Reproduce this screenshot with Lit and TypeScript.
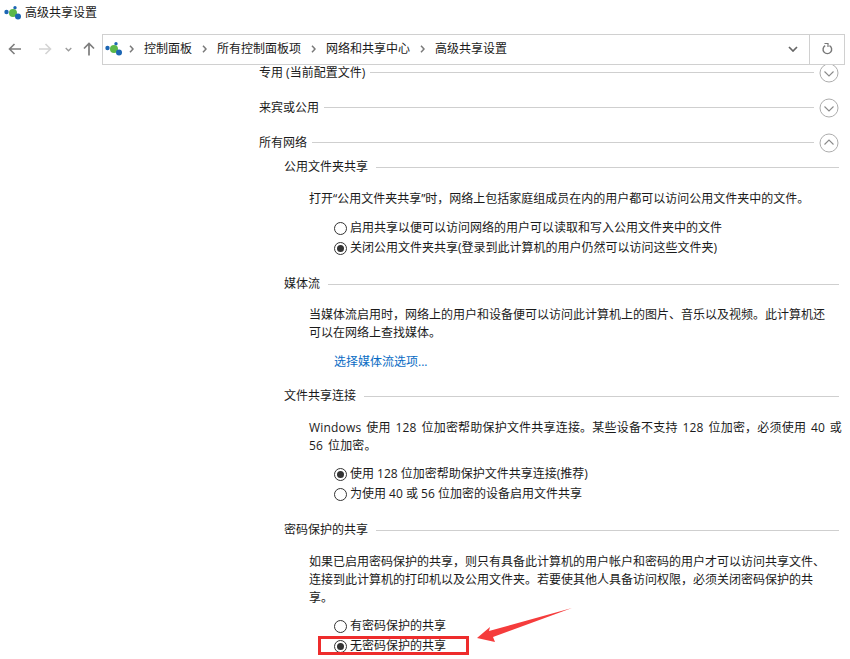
import { LitElement, html, css, svg } from "lit";
import { customElement } from "lit/decorators.js";

const netIcon = svg`<svg class="net" width="17" height="15" viewBox="0 0 17 15"><circle cx="2.500" cy="6" r="2.200" fill="#1c66b4"/><circle cx="11" cy="1.800" r="1.700" fill="#1c66b4"/><circle cx="9" cy="7" r="4" fill="#5cb84a"/><circle cx="14" cy="10.500" r="3" fill="#1c66b4"/></svg>`;

const sep = html`<svg class="sep" width="5" height="8" viewBox="0 0 5 8"><path d="M1 0.800 4 4 1 7.200" fill="none" stroke="#7a7a7a" stroke-width="1.500"/></svg>`;

const circle = (up: boolean) => html`<svg class="toggle" width="20" height="20" viewBox="0 0 20 20"><circle cx="10" cy="10" r="9" fill="#fff" stroke="#adadad"/><path d="${up ? "M5.500 11.500 10 7l4.500 4.500" : "M5.500 8.500 10 13l4.500-4.500"}" fill="none" stroke="#8a8a8a" stroke-width="1.100"/></svg>`;

const radio = (label: string, on: boolean) => html`<div class="radio"><svg width="13" height="13" viewBox="0 0 13 13"><circle cx="6.500" cy="6.500" r="6" fill="#fff" stroke="#333"/>${on ? svg`<circle cx="6.500" cy="6.500" r="3.500" fill="#333"/>` : ""}</svg><span>${label}</span></div>`;

@customElement("app-root")
export class AppRoot extends LitElement {
  static styles = css`
    :host { display: block; width: 850px; height: 659px; position: relative; overflow: hidden; background: #fff; color: #1a1a1a;
      font: 12px/20px "Open Sans", "Noto Sans CJK SC", sans-serif; }
    .title { display: flex; align-items: center; gap: 4px; height: 26px; padding-left: 4px; }
    .toolbar { display: flex; align-items: center; height: 32px; margin-top: 7px; position: relative; z-index: 1; background: #fff; }
    .navs { width: 102px; display: flex; align-items: center; flex: none; padding-left: 8px; box-sizing: border-box; }
    .navs svg { display: block; }
    .forward { margin-left: 16px; }
    .down { margin-left: 13px; }
    .up { margin-left: 11px; }
    .address { width: 743px; height: 31px; box-sizing: border-box; border: 1px solid #d0d0d0; display: flex; align-items: center; }
    .crumbs { flex: 1; display: flex; align-items: center; padding-left: 2px; gap: 10px; }
    .crumbs .net { margin-right: -3px; }
    .refresh { width: 34px; height: 100%; border-left: 1px solid #d0d0d0; display: flex; align-items: center; justify-content: center; }
    .drop { margin-right: 11px; }
    .body { margin-top: -2px; height: 596px; padding-left: 259px; padding-right: 11px; box-sizing: border-box; overflow: hidden; }
    .group { display: flex; align-items: center; height: 35px; gap: 5px; }
    .group.first { margin-top: -8px; }
    .group .rule { flex: 1; height: 1px; background: #cfcfcf; }
    .toggle { flex: none; }
    .heading { display: flex; align-items: center; gap: 8px; height: 20px; margin-left: 25px; }
    .heading .rule { flex: 1; height: 1px; background: #cfcfcf; }
    .para { margin: 13px 0 0 50px; width: 540px; line-height: 18px; }
    .para.tight { margin-top: 12px; }
    .windows { word-spacing: 1.500px; letter-spacing: .2px; }
    .radios { margin-left: 75px; margin-top: 9px; }
    .radios.wide { margin-top: 10px; }
    .radio { display: flex; align-items: center; gap: 3px; height: 20px; }
    .link { margin: 10px 0 0 75px; color: #0a6cc4; }
    .s1 { margin-top: -3px; }
    .s2 { margin-top: 16px; }
    .s3 { margin-top: 14px; }
    .mark { position: absolute; left: 0; top: 0; pointer-events: none; z-index: 2; }
  `;

  render() {
    return html`
      <div class="title">${netIcon}<span>高级共享设置</span></div>
      <div class="toolbar">
        <div class="navs">
          <svg width="14" height="12" viewBox="0 0 14 12"><path d="M13 6H2M6.500 1 1.500 6l5 5" fill="none" stroke="#7d7d7d" stroke-width="1.600"/></svg>
          <svg class="forward" width="14" height="12" viewBox="0 0 14 12"><path d="M1 6h11M7.500 1l5 5-5 5" fill="none" stroke="#d4d4d4" stroke-width="1.600"/></svg>
          <svg class="down" width="7" height="5" viewBox="0 0 7 5"><path d="M.7 1 3.500 3.800 6.300 1" fill="none" stroke="#9a9a9a" stroke-width="1.300"/></svg>
          <svg class="up" width="12" height="14" viewBox="0 0 12 14"><path d="M6 13.500V2M1 6.500 6 1.500l5 5" fill="none" stroke="#7d7d7d" stroke-width="1.700"/></svg>
        </div>
        <div class="address">
          <div class="crumbs">
            ${netIcon}${sep}<span>控制面板</span>${sep}<span>所有控制面板项</span>${sep}<span>网络和共享中心</span>${sep}<span>高级共享设置</span>
          </div>
          <svg class="drop" width="10" height="6" viewBox="0 0 10 6"><path d="M1 1 5 5 9 1" fill="none" stroke="#666" stroke-width="1.700"/></svg>
          <div class="refresh"><svg width="11" height="12" viewBox="0 0 11 12"><path d="M3.200 2.600A4.300 4.300 0 1 0 7.500 2.600" fill="none" stroke="#777" stroke-width="1.400"/><path d="M2.500 .5h3.500v3.500" fill="none" stroke="#777" stroke-width="1.200"/></svg></div>
        </div>
      </div>
      <div class="body">
        <div class="group first"><span>专用 (当前配置文件)</span><div class="rule"></div>${circle(false)}</div>
        <div class="group"><span>来宾或公用</span><div class="rule"></div>${circle(false)}</div>
        <div class="group"><span>所有网络</span><div class="rule"></div>${circle(true)}</div>
        <div class="heading s1"><span>公用文件夹共享</span><div class="rule"></div></div>
        <p class="para">打开“公用文件夹共享”时，网络上包括家庭组成员在内的用户都可以访问公用文件夹中的文件。</p>
        <div class="radios wide">
          ${radio("启用共享以便可以访问网络的用户可以读取和写入公用文件夹中的文件", false)}
          ${radio("关闭公用文件夹共享(登录到此计算机的用户仍然可以访问这些文件夹)", true)}
        </div>
        <div class="heading s2"><span>媒体流</span><div class="rule"></div></div>
        <p class="para tight">当媒体流启用时，网络上的用户和设备便可以访问此计算机上的图片、音乐以及视频。此计算机还<br>可以在网络上查找媒体。</p>
        <div class="link">选择媒体流选项...</div>
        <div class="heading s3"><span>文件共享连接</span><div class="rule"></div></div>
        <p class="para windows">Windows 使用 128 位加密帮助保护文件共享连接。某些设备不支持 128 位加密，必须使用 40 或<br>56 位加密。</p>
        <div class="radios">
          ${radio("使用 128 位加密帮助保护文件共享连接(推荐)", true)}
          ${radio("为使用 40 或 56 位加密的设备启用文件共享", false)}
        </div>
        <div class="heading s2"><span>密码保护的共享</span><div class="rule"></div></div>
        <p class="para">如果已启用密码保护的共享，则只有具备此计算机的用户帐户和密码的用户才可以访问共享文件、<br>连接到此计算机的打印机以及公用文件夹。若要使其他人具备访问权限，必须关闭密码保护的共<br>享。</p>
        <div class="radios">
          ${radio("有密码保护的共享", false)}
          ${radio("无密码保护的共享", true)}
        </div>
      </div>
      <svg class="mark" width="850" height="659" viewBox="0 0 850 659">
        <rect x="319.500" y="637.500" width="148" height="16" fill="none" stroke="#ee2c2c" stroke-width="3"/>
        <polygon points="477,638 490,627 489,631 572,608 493,637 495,642" fill="#f53c3c"/>
      </svg>
    `;
  }
}
